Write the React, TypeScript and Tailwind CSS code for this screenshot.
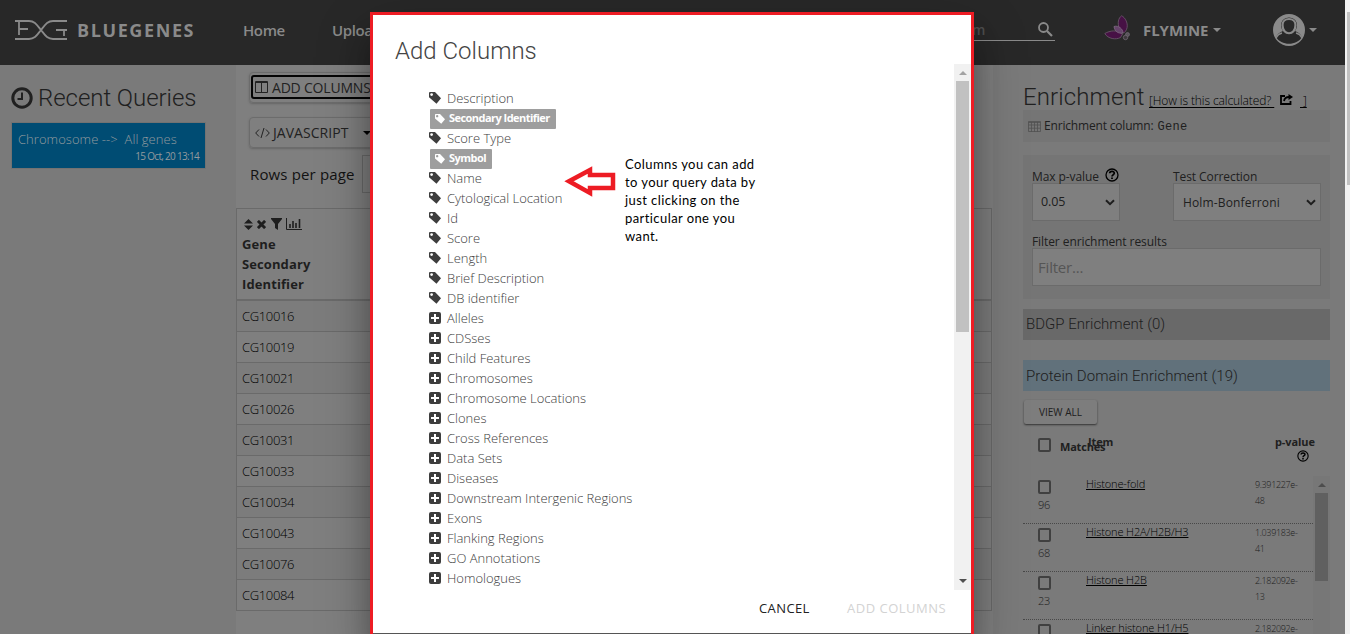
import React from "react";

const sans = "font-['Open_Sans','Noto_Sans',sans-serif]";

const attributes = [
  "Description", "Secondary Identifier", "Score Type", "Symbol", "Name", "Cytological Location",
  "Id", "Score", "Length", "Brief Description", "DB identifier",
];
const selected = ["Secondary Identifier", "Symbol"];
const collections = [
  "Alleles", "CDSses", "Child Features", "Chromosomes", "Chromosome Locations", "Clones",
  "Cross References", "Data Sets", "Diseases", "Downstream Intergenic Regions", "Exons",
  "Flanking Regions", "GO Annotations", "Homologues",
];
const genes = [
  "CG10016", "CG10019", "CG10021", "CG10026", "CG10031", "CG10033", "CG10034", "CG10043", "CG10076", "CG10084",
];
const enriched = [
  { n: "96", name: "Histone-fold", a: "9.391227e-", b: "48" },
  { n: "68", name: "Histone H2A/H2B/H3", a: "1.039183e-", b: "41" },
  { n: "23", name: "Histone H2B", a: "2.182092e-", b: "13" },
  { n: "", name: "Linker histone H1/H5", a: "2.182092e-", b: "" },
];

function Tag({ className }: { className: string }) {
  return (
    <svg className={className} viewBox="0 0 12 12" fill="currentColor">
      <path fillRule="evenodd" d="M.7 0H6L12 6.300 7.500 11.700 0 5.300V.7ZM2.600 1.200a1.400 1.400 0 1 0 0 2.800a1.400 1.400 0 0 0 0-2.800Z" />
    </svg>
  );
}

function Plus() {
  return (
    <svg className="size-3 text-[#3d3d3d]" viewBox="0 0 12 12" fill="currentColor">
      <path fillRule="evenodd" d="M2 0h8a2 2 0 0 1 2 2v8a2 2 0 0 1-2 2H2a2 2 0 0 1-2-2V2a2 2 0 0 1 2-2Zm3 2v3H2v2h3v3h2V7h3V5H7V2Z" />
    </svg>
  );
}

function Help({ className }: { className: string }) {
  return (
    <svg className={className} viewBox="0 0 14 14" fill="none" stroke="currentColor">
      <circle cx="7" cy="7" r="6" strokeWidth="1.300" />
      <path d="M4.700 5.300C4.800 2.800 9.400 2.900 9.300 5.300C9.300 6.700 7 6.700 7 8.400" strokeWidth="1.700" />
      <path d="M7 9.400v1.700" strokeWidth="1.800" />
    </svg>
  );
}

function Caret({ className }: { className: string }) {
  return (
    <svg className={className} viewBox="0 0 8 4" fill="currentColor"><path d="M0 0h8L4 4Z" /></svg>
  );
}

function Chevron() {
  return (
    <svg className="h-[7px] w-[10px] text-[#1e1e1e]" viewBox="0 0 10 7" fill="none" stroke="currentColor" strokeWidth="2">
      <path d="M1 1.300 5 5.200 9 1.300" />
    </svg>
  );
}

function Header() {
  return (
    <header className="flex h-[65px] w-[1345px] shrink-0 items-center bg-[#282828] pb-[5px] text-[#8a8a8a]">
      <svg className="ml-[14px] h-[20px] w-[54px]" viewBox="0 0 54 20" fill="none" stroke="currentColor" strokeWidth="1.800">
        <path d="M1 1h14c6 0 8 4 12 9s6 9 12 9h14" />
        <path d="M1 19h14c6 0 8-4 12-9s6-9 12-9h14" />
        <path d="M5 1v14M5 9h9M53 10H42M50 10v6" />
      </svg>
      <span className="ml-[9px] w-[166px] text-[18px] font-bold tracking-[1.600px]">BLUEGENES</span>
      <span className="w-[89px] text-[15px] font-semibold tracking-[-0.400px]">Home</span>
      <span className="w-[640px] text-[15px] font-semibold tracking-[-0.400px]">Upload</span>
      <div className="flex h-[22px] w-[83px] items-start justify-between border-b border-[#8a8a8a] text-[14px] leading-[22px] font-semibold text-[#4f4f4f]">
        <span>m</span>
        <svg className="mt-[3px] mr-[2px] size-[15px] text-[#8a8a8a]" viewBox="0 0 15 15" fill="none" stroke="currentColor">
          <circle cx="5.500" cy="5.500" r="4.500" strokeWidth="1.800" /><path d="m9 9 5 5" strokeWidth="2.200" />
        </svg>
      </div>
      <svg className="-mt-[4px] ml-[49px] h-[26px] w-[27px]" viewBox="0 0 27 26">
        <path d="M15.500 14C13 8 14.500 3 17.500.8 21 2 25 9 22.500 14.500 21 17.500 20 18 18.500 18Z" fill="#471145" stroke="#685368" strokeWidth=".9" />
        <path d="M18.500 19C13 14.500 6 15.500.8 18.500 4 24 12 25 16.500 22.500Z" fill="#471145" stroke="#685368" strokeWidth=".9" />
        <path d="M10 11.500C14.500 10 19 14 19 18 14 19 10.500 16 10 11.500Z" fill="#66446b" stroke="#806b83" strokeWidth=".8" />
        <circle cx="23.500" cy="19.500" r="2" fill="#5a545b" stroke="#77717a" strokeWidth=".6" />
        <circle cx="21.500" cy="22.500" r="2.200" fill="#3d383d" stroke="#716a73" strokeWidth=".8" />
      </svg>
      <span className="ml-[12px] w-[70px] text-[15px] font-bold tracking-[-0.050px]">FLYMINE</span>
      <Caret className="h-1 w-2" />
      <svg className="ml-[52px] size-[32px]" viewBox="0 0 32 32" fill="currentColor">
        <path fillRule="evenodd" d="M16 0a16 16 0 1 0 0 32 16 16 0 0 0 0-32Zm-6 17C6 12 8 3.500 16 3.500S26 12 22 17c3 1 5.500 3 7 6-5 9-21 9-26 0 1.500-3 4-5 7-6Z" />
        <path d="M9.500 11C9.500 3 22.500 3 22.500 11c0 11-13 11-13 0Z" fill="#282828" stroke="currentColor" strokeWidth="2.200" />
        <path d="M9 19C5 20 4 22 3 24M23 19c4 1 5 3 6 5" fill="none" stroke="currentColor" strokeWidth="1.500" />
      </svg>
      <Caret className="ml-[4px] h-1 w-2" />
    </header>
  );
}

function RecentQueries() {
  return (
    <aside className="w-[236px] shrink-0 bg-[#7a7a7a] pl-[11px]">
      <div className="flex h-[58px] items-center pt-[7px]">
        <svg className="size-[22px] text-[#202020]" viewBox="0 0 22 22" fill="none" stroke="currentColor">
          <circle cx="11" cy="11" r="9.200" strokeWidth="3" /><path d="M11 5.500V12H6.500" strokeWidth="2" />
        </svg>
        <h2 className="ml-[5px] font-['Roboto'] text-[24px] font-light tracking-[-0.050px] text-[#202020]">Recent Queries</h2>
      </div>
      <div className="ml-px flex h-[45px] w-[193px] flex-col bg-[#004c73] px-[6px] pt-[7px] text-[#929a9e] outline outline-[#727272]">
        <span className="text-[13px] leading-[19px] font-light tracking-[0.050px] whitespace-pre">{"Chromosome -->  All genes"}</span>
        <span className="self-end text-[10px] leading-[15px] tracking-[-0.700px]">15 Oct, 20 13:14</span>
      </div>
    </aside>
  );
}

function Results() {
  return (
    <main className="w-[757px] shrink-0 bg-[#7f7f7f] text-[#121212]">
      <div className="mt-[7px] ml-[13px] h-[31px] w-[160px] rounded-sm border border-[#6c6c6c] py-[2px] pr-[2px] pl-px shadow-[0_1px_2px_#5559]">
        <div className="flex h-[24px] items-center rounded-[3px] border-2 border-[#050505] pl-[2px] text-[14px] tracking-[-0.200px] text-[#222]">
          <svg className="mr-[4px] h-[12px] w-[13px]" viewBox="0 0 13 12" fill="none" stroke="currentColor"><path d="M.5.5h12v11H.5ZM6.500 1v10M1 1.500h11" /></svg>
          <span className="whitespace-nowrap">ADD COLUMNS</span>
        </div>
      </div>
      <div className="mt-[14px] ml-[13px] flex h-[31px] w-[140px] items-center rounded-sm border border-[#6c6c6c] pl-[5px] text-[14px] tracking-[0.050px] text-[#222] shadow-[0_1px_2px_#5559]">
        <svg className="mr-[3px] h-[10px] w-[15px]" viewBox="0 0 15 10" fill="none" stroke="currentColor"><path d="M4 1.500.7 5 4 8.500M11 1.500 14.300 5 11 8.500M9 0 6 10" /></svg>
        <span className="-mt-px w-[90px]">JAVASCRIPT</span>
        <Caret className="h-1 w-2 text-black" />
      </div>
      <div className="mt-[7px] ml-[14px] flex h-[38px] items-center text-[15px]">
        <span className="w-[112px] tracking-[0.150px]">Rows per page</span>
        <div className="h-[38px] w-[90px] border border-[#696969]" />
      </div>
      <div className="mt-[15px] w-[756px] border border-[#6a6a6a]">
        <div className="h-[92px] border-b-2 border-[#6a6a6a] pt-[8px] pl-[5px]">
          <div className="flex h-[14px] items-center gap-[4px] pl-[2px] text-[#1e1e1e]">
            <svg className="h-[11px] w-[9px]" viewBox="0 0 9 11" fill="currentColor"><path d="M0 4.500 4.500 0 9 4.500ZM0 6.500h9L4.500 11Z" /></svg>
            <svg className="size-[9px]" viewBox="0 0 10 10" stroke="currentColor" strokeWidth="3.200"><path d="m1 1 8 8M9 1 1 9" /></svg>
            <svg className="ml-px h-[12px] w-[11px]" viewBox="0 0 11 12" fill="currentColor"><path d="M0 0h11v1L7 6v6L4 10V6L0 1Z" /></svg>
            <svg className="h-[12px] w-[16px]" viewBox="0 0 16 12" fill="none" stroke="currentColor"><path d="M.5 0v11.500H16" /><path d="M4 10V6M7 10V3M10 10V5M13.500 10V1" strokeWidth="1.600" /></svg>
          </div>
          <div className="mt-[3px] text-[13px] leading-[20px] font-bold tracking-[0.100px] text-[#1e1e1e]">
            <div>Gene</div><div>Secondary</div><div>Identifier</div>
          </div>
        </div>
        {genes.map((g, i) => (
          <div key={g} className={"pl-[5px] text-[13px] leading-[30px] font-light tracking-[-0.350px] text-black " + (i < 9 ? "h-[31px] border-b border-[#6a6a6a]" : "h-[30px]") + (i % 2 ? "" : " bg-[#7c7c7c]")}>{g}</div>
        ))}
      </div>
    </main>
  );
}

function Enrichment() {
  return (
    <section className="w-[352px] shrink-0 bg-[#7a7a7a] pl-[30px] text-[#202020]">
      <div className="flex h-[45px] w-[320px] items-baseline pt-[15px]">
        <h2 className="w-[126px] font-['Roboto'] text-[24px] leading-[34px] font-light tracking-[0.120px]">Enrichment</h2>
        <div className="flex items-baseline text-[12px] leading-[14px] font-light tracking-[-0.100px] text-black">
          <span className="w-[124px] whitespace-nowrap underline underline-offset-2">[How is this calculated?&nbsp;</span>
          <svg className="ml-[7px] h-[11px] w-[13px]" viewBox="0 0 13 11" fill="none" stroke="currentColor" strokeWidth="1.800"><path d="M5 2H1v8h9.500V7" /><path d="M4 7C4.500 4 6 3 9 3" /><path d="M8.500 0 13 3 8.500 6Z" fill="currentColor" stroke="none" /></svg>
          <span className="ml-[7px] underline underline-offset-2">&nbsp;]</span>
        </div>
      </div>
      <div className="flex h-[32px] w-[307px] items-center bg-[#757575] pl-[5px] text-[12px] tracking-[-0.180px]">
        <svg className="mr-[3px] h-[11px] w-[13px] text-[#505050]" viewBox="0 0 13 11" fill="none" stroke="currentColor" strokeWidth=".8"><path d="M.5.5h12v10H.5ZM.5 1.500h12M.5 4h12M.5 7.200h12M3.500 1v10M6.500 1v10M9.500 1v10" /></svg>
        <span>Enrichment column:</span>
        <span className="mt-px ml-[4px] font-['Liberation_Mono'] text-[12px] tracking-[0.300px]">Gene</span>
      </div>
      <div className="mt-[13px] h-[144px] w-[307px] bg-[#757575] px-[9px] pt-[13px] text-[12px] tracking-[-0.080px]">
        <div className="flex">
          <div className="w-[141px]">
            <div className="flex h-[15px] items-center pt-[2px]">Max p-value<Help className="-mt-1 ml-[6px] size-[14px] shrink-0 text-black" /></div>
            <div className="flex h-[38px] w-[88px] items-center justify-between border border-[#6b6b6b] bg-[#7f7f7f] pr-[4px] pl-[8px] text-[12.500px]"><span className="pt-px">0.05</span><Chevron /></div>
          </div>
          <div>
            <div className="flex h-[15px] items-center pt-[2px]">Test Correction</div>
            <div className="flex h-[38px] w-[148px] items-center justify-between border border-[#6b6b6b] bg-[#7f7f7f] pr-[4px] pl-[9px] text-[12px]"><span className="pt-px tracking-[0.150px]">Holm-Bonferroni</span><Chevron /></div>
          </div>
        </div>
        <div className="mt-[12px] h-[15px] pt-px leading-[15px]">Filter enrichment results</div>
        <div className="flex h-[38px] w-[289px] items-center border border-[#6b6b6b] bg-[#7f7f7f] pl-[5px] text-[15px] tracking-[-0.200px] text-[#555]">Filter...</div>
      </div>
      <div className="mt-[10px] h-[31px] w-[307px] bg-[#696969] pl-[3px] font-['Roboto'] text-[15px] leading-[30px] font-light">BDGP Enrichment (0)</div>
      <div className="mt-[20px] h-[31px] w-[307px] bg-[#61717b] pl-[3px] font-['Roboto'] text-[15px] leading-[32px] font-light tracking-[0.050px]">Protein Domain Enrichment (19)</div>
      <div className="mt-[9px] ml-px flex h-[24px] w-[73px] items-center justify-center rounded-xs bg-[#7d7d7d] text-[10px] shadow-[0_1px_2px_#333]">VIEW ALL</div>
      <div className="flex h-[52px] w-[307px] text-[11px] font-bold tracking-[-0.100px]">
        <div className="mt-[14px] ml-[15px] h-[14px] w-[13px] rounded-xs border-2 border-[#404040]" />
        <div className="mt-[15px] ml-[9px] w-[28px] leading-[16px] tracking-[-0.200px]">Matches</div>
        <div className="mt-[10px] w-[187px] leading-[16px]">Item</div>
        <div className="mt-[10px] flex w-[42px] flex-col leading-[16px]">p-value<Help className="ml-[22px] size-[12px] text-black" /></div>
      </div>
      <div className="flex h-[158px] w-[307px] overflow-hidden">
        <div className="w-[290px]">
          {enriched.map((r) => (
            <div key={r.name} className="flex h-[48px] border-b border-dotted border-[#484848] pt-[4px] pl-[15px]">
              <div className="w-[48px]">
                <div className="h-[14px] w-[13px] rounded-xs border-2 border-[#404040]" />
                <div className="mt-[3px] text-[11px] leading-[16px] font-light tracking-[-0.250px]">{r.n}</div>
              </div>
              <div className="w-[169px] text-[11px] leading-[8px] font-light tracking-[-0.120px] text-black underline">{r.name}</div>
              <div className="-mt-[3px] text-[9px] leading-[16px] font-light tracking-[-0.350px]">{r.a}<br />{r.b}</div>
            </div>
          ))}
        </div>
        <div className="flex w-[17px] flex-col items-center bg-[#777]">
          <Caret className="mt-[7px] h-1 w-2 shrink-0 rotate-180 text-[#4d4d4d]" />
          <div className="mt-[6px] h-[88px] w-[13px] shrink-0 bg-[#606060]" />
        </div>
      </div>
    </section>
  );
}

function AddColumnsDialog() {
  return (
    <div className="absolute top-[12px] left-[370px] h-[630px] w-[604px] border-[3px] border-[#ed1c24] bg-white shadow-[0_27px_24px_0_rgba(0,0,0,0.2),0_20px_50px_0_rgba(0,0,0,0.28)]">
      <div className="flex h-[619px] flex-col border-b border-[#555]">
        <h1 className="h-[49px] pt-[19px] pl-[22px] font-['Roboto'] text-[24px] leading-[34px] font-light text-[#444]">Add Columns</h1>
        <div className="flex h-[526px]">
          <ul className="w-[581px] pt-[24px] pl-[57px] text-[13px] font-light tracking-[-0.010px] text-[#3d3d3d]">
            {attributes.map((a) => (
              <li key={a} className="flex h-[20px] items-center">
                {selected.includes(a) ? (
                  <span className="mt-[2px] flex h-[20px] items-center rounded-[1px] bg-[#9e9e9e] pr-[6px] pl-[5px] text-[11px] font-bold tracking-[-0.540px] text-white">
                    <Tag className="mr-[4px] size-[10px]" /><span className="-mt-px">{a}</span>
                  </span>
                ) : (
                  <><Tag className="mr-[6px] -ml-px size-3" /><span className="pt-px">{a}</span></>
                )}
              </li>
            ))}
            {collections.map((c) => (
              <li key={c} className="flex h-[20px] items-center gap-[5px]"><span className="-ml-px"><Plus /></span><span className="pt-px pl-px">{c}</span></li>
            ))}
          </ul>
          <div className="flex w-[17px] flex-col items-center bg-[#f1f1f1]">
            <Caret className="mt-[7px] h-1 w-2 shrink-0 rotate-180 text-[#a3a3a3]" />
            <div className="mt-[6px] h-[251px] w-[13px] shrink-0 bg-[#c1c1c1]" />
            <Caret className="mt-auto mb-[7px] h-1 w-2 shrink-0 text-[#505050]" />
          </div>
        </div>
        <div className="flex h-[37px] items-center pl-[386px] text-[13px] font-medium">
          <span className="w-[88px] tracking-[0.400px] text-[#222]">CANCEL</span>
          <span className="tracking-[0.500px] text-[#d3d3d3]">ADD COLUMNS</span>
        </div>
      </div>
      <div className="absolute top-[140px] left-[188px] flex">
        <svg className="mt-[10px] h-[32px] w-[55px]" viewBox="0 0 55 32" fill="#fff" stroke="#ed1c24" strokeWidth="4.500"><path d="M8 16.300 29 5V10H52V23H29V28Z" /></svg>
        <p className="ml-[9px] w-[150px] font-['Lato','Noto_Sans',sans-serif] text-[13px] leading-[18px] tracking-[0.420px] text-black">
          Columns you can add<br />to your query data by<br />just clicking on the<br />particular one you<br />want.
        </p>
      </div>
    </div>
  );
}

export default function App() {
  return (
    <div className={"relative flex h-[634px] w-[1350px] overflow-hidden " + sans}>
      <div className="flex w-[1345px] flex-col">
        <Header />
        <div className="flex h-[569px]"><RecentQueries /><Results /><Enrichment /></div>
      </div>
      <div className="w-[5px] bg-[#f1f1f1] pt-[12px] pl-[2px]"><div className="h-[173px] bg-[#c1c1c1]" /></div>
      <AddColumnsDialog />
    </div>
  );
}
